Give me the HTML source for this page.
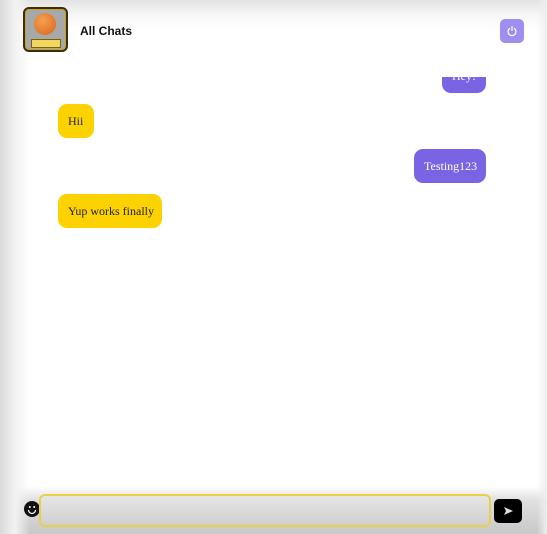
<!DOCTYPE html>
<html><head><style>
html,body{margin:0;padding:0;width:547px;height:534px;overflow:hidden;background:#fff;position:relative;font-family:"Liberation Sans",sans-serif}
.edge{position:absolute;left:0;top:0;width:30px;height:534px;background:linear-gradient(to right,#dadada,#f2f2f2 50%,rgba(255,255,255,0));z-index:2}
.redge{position:absolute;right:0;top:0;width:10px;height:534px;background:linear-gradient(to left,#eee,rgba(255,255,255,0));z-index:2}
.b{position:absolute;border-radius:9px;font-family:"Liberation Serif",serif;font-size:12px;line-height:34px;padding:0 10px;box-sizing:border-box;height:34px;white-space:nowrap}
.y{background:#fcd200;color:#222}
.p{background:#7a64e3;color:#fff}
.hdr{position:absolute;left:0;top:0;width:547px;height:77px;background:linear-gradient(#e2e2e2 0,#f6f6f6 14px,#fff 30px);z-index:1}
.bot{position:absolute;left:0;top:486px;width:547px;height:48px;background:linear-gradient(#fff,#e0e0e0 30%,#c8c8c8);z-index:1}
.z{z-index:3}
</style></head><body>
<div class="edge"></div><div class="redge"></div>
<div class="b p" style="left:442px;top:59px;width:44px;">Hey!</div>
<div class="hdr"></div>
<div class="z" style="position:absolute;left:23px;top:7px;width:45px;height:45px;box-sizing:border-box;border:2px solid #3a2e10;border-radius:6px;background:#a8a8a8;box-shadow:inset 0 0 0 1px #c9a21c">
 <div style="position:absolute;left:9px;top:4px;width:22px;height:22px;border-radius:50%;background:radial-gradient(circle at 40% 35%,#f5a050,#d8641a)"></div>
 <div style="position:absolute;left:6px;top:30px;width:28px;height:7px;background:#f0d860;border:1px solid #7a6010"></div>
</div>
<div class="z" style="position:absolute;left:80px;top:24px;font-weight:bold;font-size:12px;color:#111">All Chats</div>
<div class="z" style="position:absolute;left:500px;top:19px;width:24px;height:24px;border-radius:5px;background:#9d8ef0">
 <svg width="24" height="24" viewBox="0 0 24 24"><path d="M9.5 9.5a4 4 0 1 0 5 0M12 7.5v4" fill="none" stroke="#fff" stroke-width="1.2" stroke-linecap="round"/></svg>
</div>
<div class="b y" style="left:58px;top:104px;width:36px;">Hii</div>
<div class="b p" style="left:414px;top:149px;width:72px;">Testing123</div>
<div class="b y" style="left:58px;top:194px;width:104px;">Yup works finally</div>
<div class="bot"></div>
<div class="z" style="position:absolute;left:24px;top:501px;width:16px;height:16px;border-radius:50%;background:#111">
 <svg width="16" height="16" viewBox="0 0 16 16"><circle cx="5.8" cy="6" r="1" fill="#fff"/><circle cx="10.2" cy="6" r="1" fill="#fff"/><path d="M4.5 9a3.5 3.5 0 0 0 7 0" fill="none" stroke="#fff" stroke-width="1.2"/></svg>
</div>
<div class="z" style="position:absolute;left:39px;top:494px;width:452px;height:33px;box-sizing:border-box;border:2px solid #e8d048;border-radius:6px;background:linear-gradient(#e6e6e6,#cfcfcf)"></div>
<div class="z" style="position:absolute;left:494px;top:499px;width:28px;height:24px;border-radius:5px;background:#000">
 <svg width="28" height="24" viewBox="0 0 28 24"><path d="M10 8l9 4-9 4 2-4z" fill="#ddd"/></svg>
</div>
</body></html>
